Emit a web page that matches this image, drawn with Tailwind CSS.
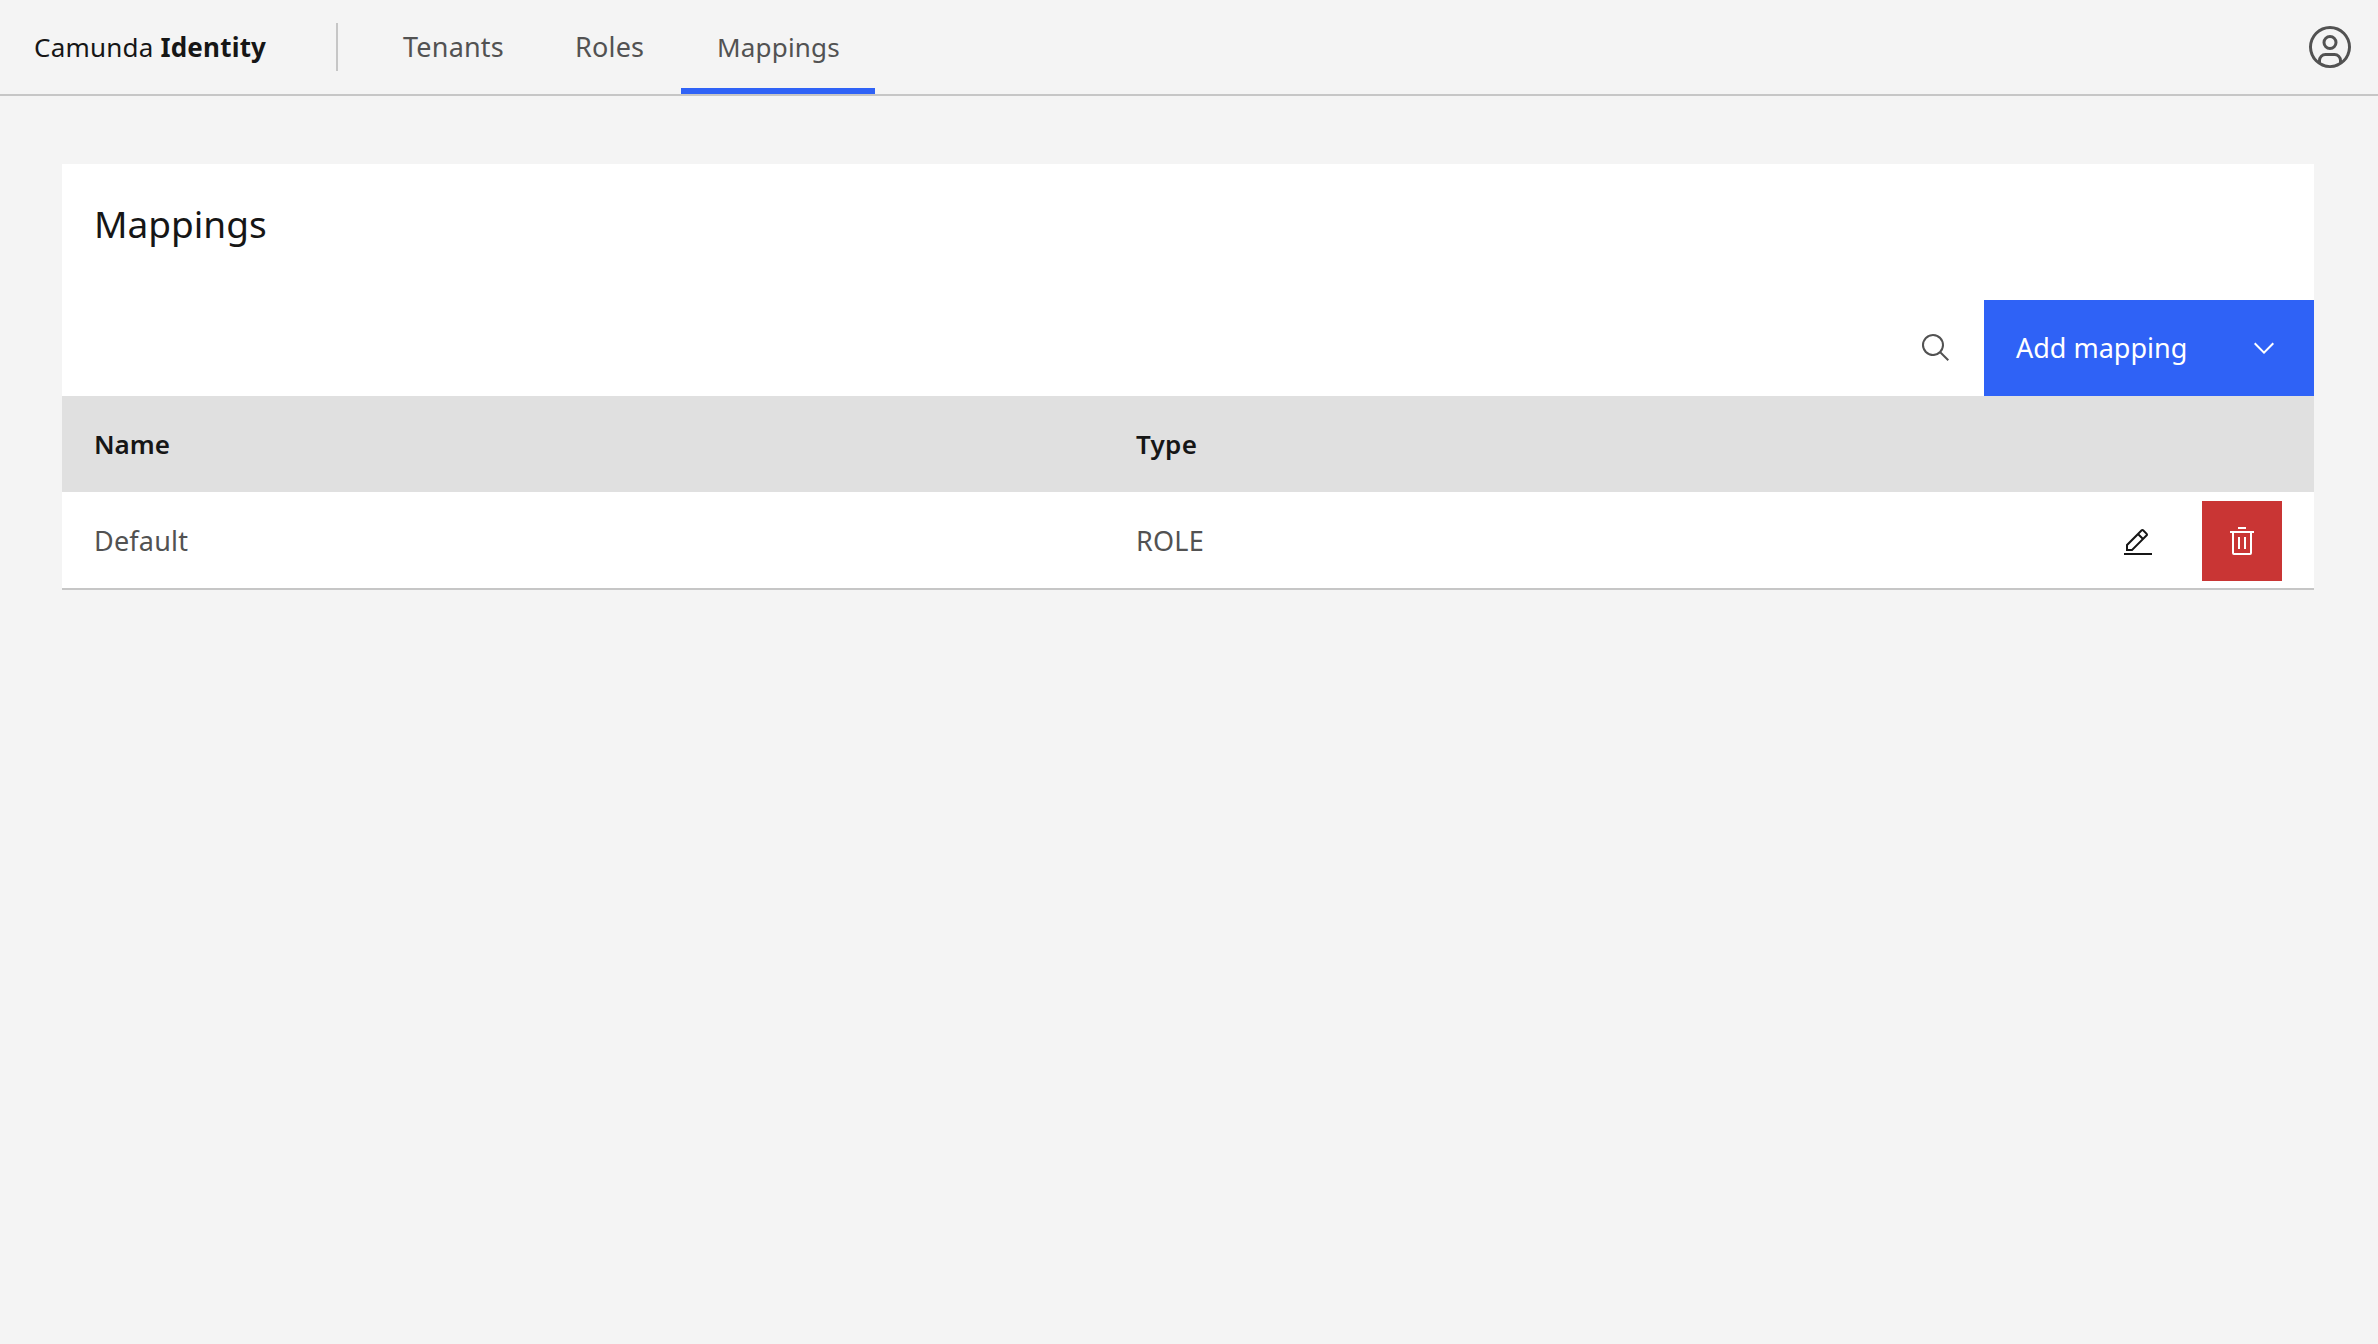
<!DOCTYPE html>
<html lang="en">
<head>
<meta charset="utf-8">
<title>Camunda Identity</title>
<script src="https://cdn.jsdelivr.net/npm/@tailwindcss/browser@4"></script>
</head>
<body class="m-0 h-[1344px] w-[2378px] overflow-hidden bg-[#f4f4f4] font-['Noto_Sans','Open_Sans',sans-serif] text-[#161616]">
<header class="flex h-[96px] items-stretch border-b-2 border-[#c6c6c6]">
  <a class="flex w-[336px] shrink-0 items-center pl-[34px] text-[26px] tracking-[0.2px]"><span>Camunda&nbsp;<b class="font-bold">Identity</b></span></a>
  <div class="mt-[23px] h-[48px] w-[2px] bg-[#c6c6c6]"></div>
  <nav class="ml-[29px] flex flex-1 text-[27px] tracking-[0.2px] text-[#525252]">
    <a class="flex h-[94px] w-[172px] items-center pl-[36px]">Tenants</a>
    <a class="flex h-[94px] w-[142px] items-center pl-[36px]">Roles</a>
    <a class="flex h-[94px] w-[194px] items-center border-b-[6px] border-[#2f62f6] pl-[36px] pt-[6px] text-[26px]">Mappings</a>
  </nav>
  <button class="flex w-[96px] items-center justify-center text-[#525252]">
    <svg class="h-[48px] w-[48px]" viewBox="0 0 32 32" fill="currentColor"><path d="M16,8a5,5,0,1,0,5,5A5,5,0,0,0,16,8Zm0,8a3,3,0,1,1,3-3A3.0034,3.0034,0,0,1,16,16Z"/><path d="M16,2A14,14,0,1,0,30,16,14.0158,14.0158,0,0,0,16,2ZM10,26.3765V25a3.0033,3.0033,0,0,1,3-3h6a3.0033,3.0033,0,0,1,3,3v1.3765a11.8989,11.8989,0,0,1-12,0Zm13.9925-1.4507A5.0016,5.0016,0,0,0,19,20H13a5.0016,5.0016,0,0,0-4.9925,4.9258,12,12,0,1,1,15.985,0Z"/></svg>
  </button>
</header>
<main class="mt-[68px] mr-[64px] ml-[62px]">
  <section class="bg-white">
    <h1 class="h-[136px] pl-[32px] pt-[35px] text-[37px] leading-[50px] font-normal">Mappings</h1>
    <div class="flex h-[96px] items-stretch justify-end">
      <button class="flex w-[96px] items-center justify-center text-[#525252]">
        <svg class="h-[32px] w-[32px]" viewBox="0 0 32 32" fill="currentColor"><path d="M29,27.5859l-7.5521-7.5521a11.0177,11.0177,0,1,0-1.4141,1.4141L27.5859,29ZM4,13a9,9,0,1,1,9,9A9.01,9.01,0,0,1,4,13Z"/></svg>
      </button>
      <button class="flex w-[330px] items-center justify-between bg-[#2f62f6] pl-[32px] pr-[34px] text-[27px] text-white">
        <span>Add mapping</span>
        <svg class="h-[32px] w-[32px]" viewBox="0 0 16 16" fill="currentColor"><path d="M8 11L3 6 3.7 5.3 8 9.6 12.3 5.3 13 6z"/></svg>
      </button>
    </div>
    <div class="grid h-[96px] grid-cols-[1042px_1fr] items-center bg-[#e0e0e0] pl-[32px] text-[26px] font-semibold">
      <div>Name</div>
      <div class="tracking-[0.3px]">Type</div>
    </div>
    <div class="grid h-[98px] grid-cols-[1042px_1fr_auto] items-center border-b-2 border-[#c6c6c6] pl-[32px] pt-[2px] text-[27px] tracking-[0.2px] text-[#525252]">
      <div>Default</div>
      <div>ROLE</div>
      <div class="flex items-center pr-[32px]">
        <button class="flex h-[80px] w-[80px] items-center justify-center pt-[4px] text-[#161616]">
          <svg class="h-[32px] w-[32px]" viewBox="0 0 32 32" fill="currentColor"><path d="M2 26H30V28H2zM25.4 9c.8-.8.8-2 0-2.8 0 0 0 0 0 0l-3.6-3.6c-.8-.8-2-.8-2.8 0 0 0 0 0 0 0l-15 15V24h6.4L25.4 9zM20.4 4L24 7.6l-3 3L17.4 7 20.4 4zM6 22v-3.6l10-10 3.6 3.6-10 10H6z"/></svg>
        </button>
        <button class="ml-[24px] flex h-[80px] w-[80px] items-center justify-center bg-[#c93534] text-white">
          <svg class="h-[32px] w-[32px]" viewBox="0 0 32 32" fill="currentColor"><path d="M12 12H14V24H12zM18 12H20V24H18z"/><path d="M4 6V8H6V28a2 2 0 002 2H24a2 2 0 002-2V8h2V6zM8 28V8H24V28zM12 2H20V4H12z"/></svg>
        </button>
      </div>
    </div>
  </section>
</main>
</body>
</html>
